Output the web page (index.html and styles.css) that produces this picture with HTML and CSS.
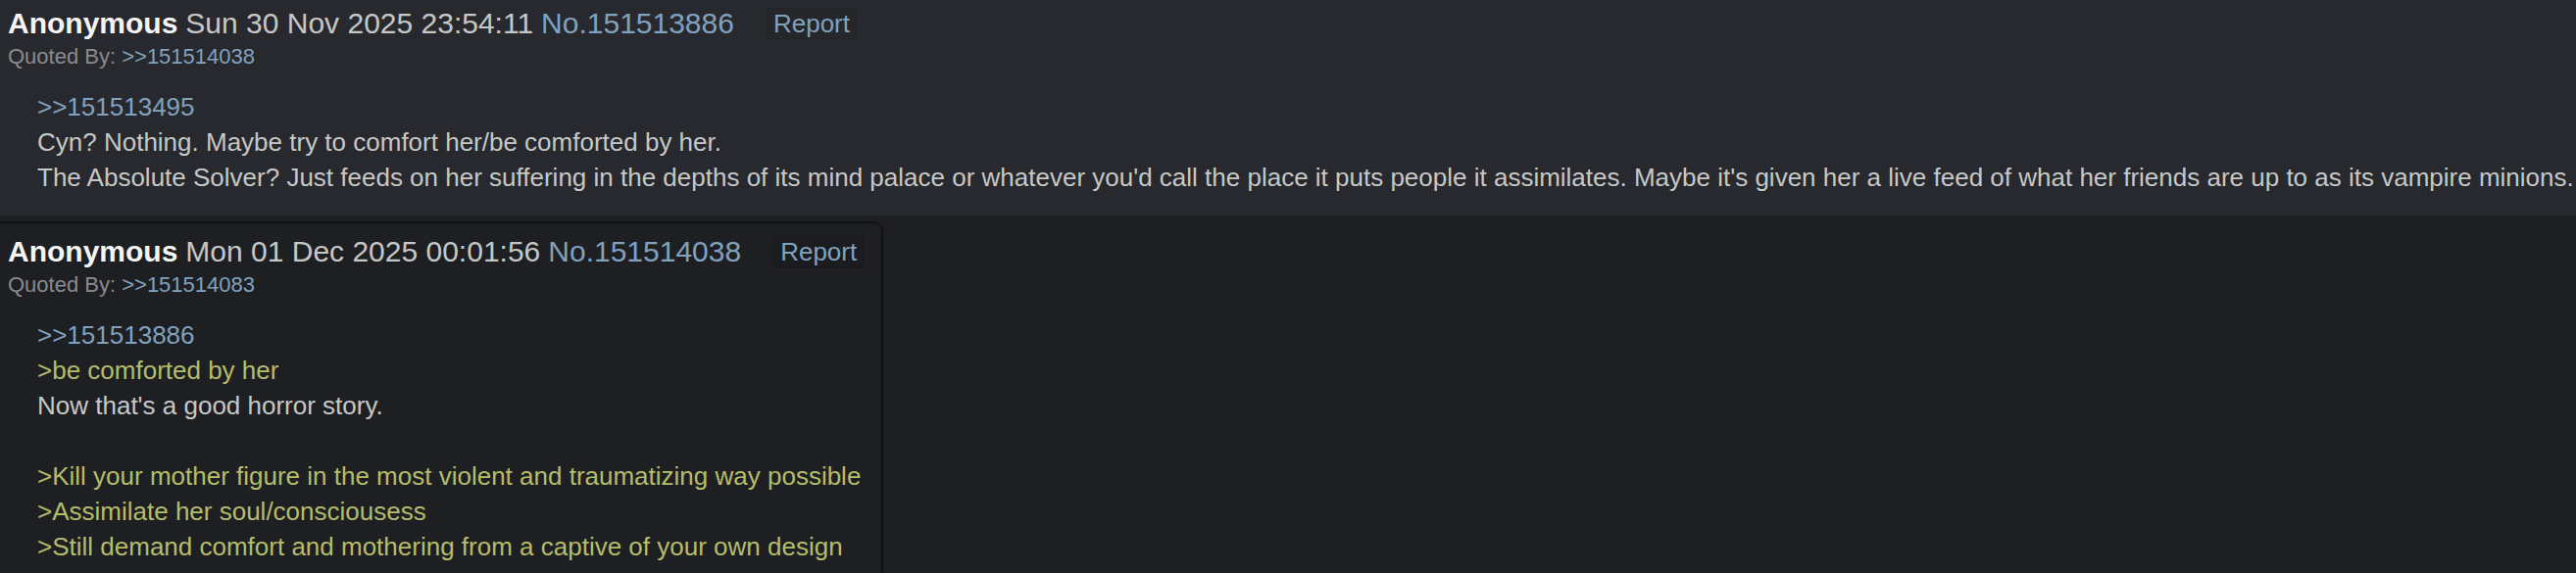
FILE: index.html
```html
<!DOCTYPE html>
<html>
<head>
<meta charset="utf-8">
<link rel="stylesheet" href="styles.css">
</head>
<body>
<div class="thread">
  <div class="post post-hl">
    <div class="postinfo">
      <span class="name">Anonymous</span>
      <span class="date">Sun 30 Nov 2025 23:54:11</span>
      <a class="postnum">No.151513886</a>
      <a class="report">Report</a>
    </div>
    <div class="backlinks">Quoted By: <a class="qlink">&gt;&gt;151514038</a></div>
    <blockquote class="message">
      <a class="qlink">&gt;&gt;151513495</a><br>
      Cyn? Nothing. Maybe try to comfort her/be comforted by her.<br>
      The Absolute Solver? Just feeds on her suffering in the depths of its mind palace or whatever you'd call the place it puts people it assimilates. Maybe it's given her a live feed of what her friends are up to as its vampire minions.
    </blockquote>
  </div>
  <div class="post post-box">
    <div class="postinfo">
      <span class="name">Anonymous</span>
      <span class="date">Mon 01 Dec 2025 00:01:56</span>
      <a class="postnum">No.151514038</a>
      <a class="report">Report</a>
    </div>
    <div class="backlinks">Quoted By: <a class="qlink">&gt;&gt;151514083</a></div>
    <blockquote class="message">
      <a class="qlink">&gt;&gt;151513886</a><br>
      <span class="greentext">&gt;be comforted by her</span><br>
      Now that's a good horror story.<br>
      <br>
      <span class="greentext">&gt;Kill your mother figure in the most violent and traumatizing way possible</span><br>
      <span class="greentext">&gt;Assimilate her soul/consciousess</span><br>
      <span class="greentext">&gt;Still demand comfort and mothering from a captive of your own design</span>
    </blockquote>
  </div>
</div>
</body>
</html>
```
FILE: styles.css
```css
html, body {
  margin: 0;
  padding: 0;
  background: #1d1e22;
}
body {
  font-family: "Liberation Sans", Arial, sans-serif;
  color: #c5c8c6;
}
.thread {
  display: flex;
  flex-direction: column;
  align-items: flex-start;
  gap: 6px;
}
.post {
  box-sizing: border-box;
}
.post-hl {
  width: 100%;
  background: #28292e;
  padding: 6px 0 21px 0;
}
.post-box {
  width: 901px;
  background: #1e1f23;
  border: 2px solid #101114;
  border-left: none;
  border-radius: 0 10px 10px 0;
  padding: 11px 0 20px 0;
}
.postinfo {
  display: flex;
  align-items: center;
  padding-left: 8px;
  font-size: 30px;
  line-height: 36px;
  white-space: nowrap;
}
.name {
  color: #f4f4f4;
  font-weight: bold;
  margin-right: 8px;
}
.date {
  color: #c5c8c6;
  margin-right: 8px;
}
.postnum {
  color: #81a2be;
}
.report {
  color: #81a2be;
  font-size: 26px;
  line-height: 30px;
  margin-left: 33px;
  padding: 0 6px;
  background: #25272b;
  border: 1px solid #222327;
}
.post-box .report {
  background: #1b1c20;
  border-color: #19191d;
}
.backlinks {
  padding-left: 8px;
  font-size: 22px;
  line-height: 32px;
  color: #8a8b8d;
}
.qlink {
  color: #81a2be;
}
.message {
  margin: 17px 0 0 38px;
  font-size: 26px;
  line-height: 36px;
  white-space: nowrap;
}
.greentext {
  color: #b5bd68;
}
```
